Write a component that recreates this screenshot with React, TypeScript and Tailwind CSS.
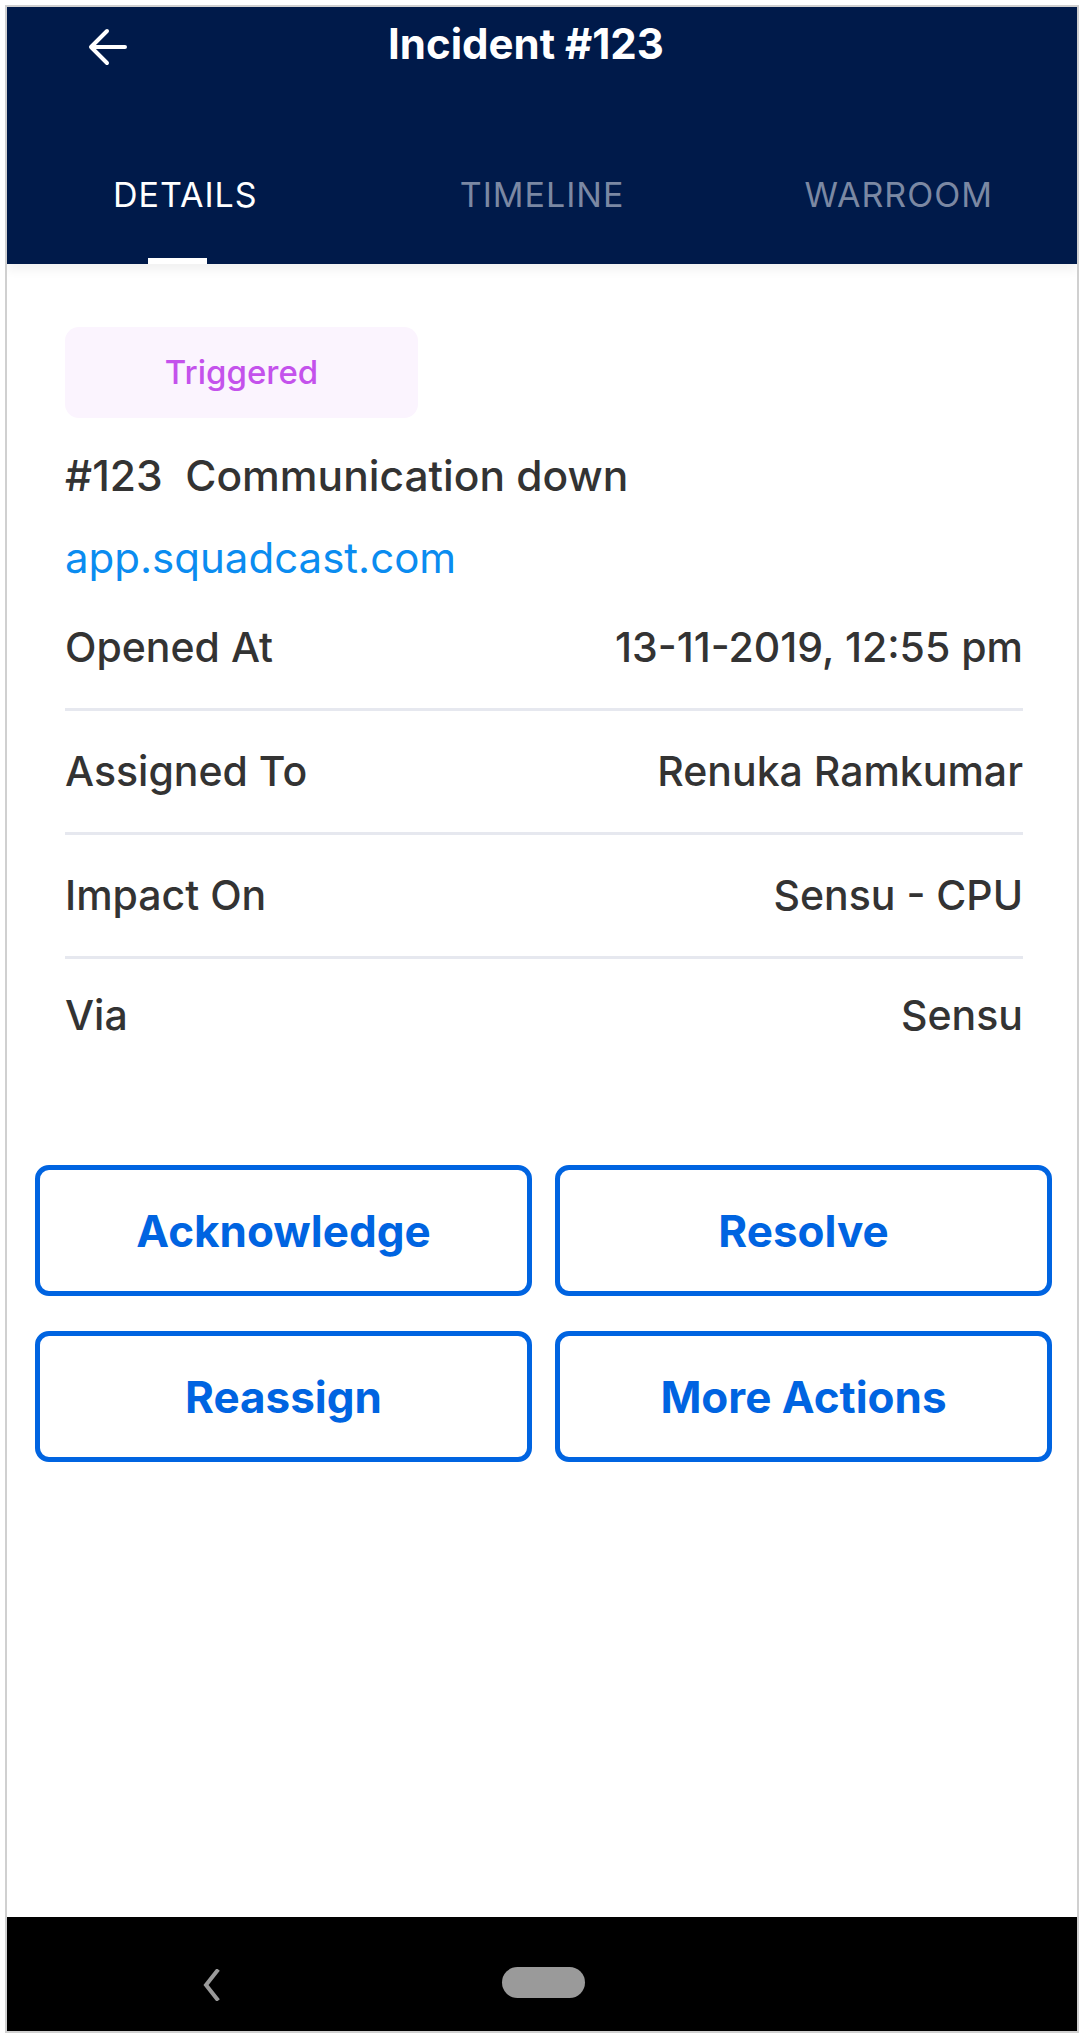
import React from 'react';

const rows = [
  { label: 'Opened At', value: '13-11-2019, 12:55 pm' },
  { label: 'Assigned To', value: 'Renuka Ramkumar' },
  { label: 'Impact On', value: 'Sensu - CPU' },
  { label: 'Via', value: 'Sensu' },
];

const actions = ['Acknowledge', 'Resolve', 'Reassign', 'More Actions'];

const tabs = ['DETAILS', 'TIMELINE', 'WARROOM'];

const App: React.FC = () => {
  return (
    <div className="w-[1084px] h-[2038px] bg-white p-[5px] font-['Inter',sans-serif]">
      <div className="h-full border-2 border-[#d0d0d0] flex flex-col overflow-hidden">
        {/* Header */}
        <div className="bg-[#001a4a] h-[257px] flex flex-col shrink-0 relative z-10 shadow-[0_6px_10px_rgba(0,0,0,0.06)]">
          <div className="h-[74px] flex items-center pl-[81px]">
            <svg width="40" height="40" viewBox="0 0 40 40" fill="none" className="mt-[6px]">
              <path d="M37 20H4M19 4L3 20l16 16" stroke="white" strokeWidth="4" strokeLinecap="round" strokeLinejoin="round" />
            </svg>
            <h1 className="ml-[260px] text-white text-[42px] font-bold leading-none">Incident #123</h1>
          </div>
          <div className="mt-auto h-[140px] flex">
            {tabs.map((t, i) => (
              <div key={t} className="flex-1 relative flex items-center justify-center">
                <span className={`text-[34px] tracking-[1px] ${i === 0 ? 'text-white' : 'text-[#7b88a3]'}`}>{t}</span>
                {i === 0 && <div className="absolute bottom-0 left-[141px] w-[59px] h-[6px] bg-white" />}
              </div>
            ))}
          </div>
        </div>

        {/* Body */}
        <div className="flex-1 flex flex-col">
          <div className="pl-[58px] pr-[54px] pt-[63px]">
            <div className="w-[353px] h-[91px] rounded-[14px] bg-[#fbf4fe] flex items-center justify-center">
              <span className="text-[33px] font-medium text-[#c452ec]">Triggered</span>
            </div>
            <p className="mt-[28px] text-[42.5px] leading-[60px] font-medium text-[#333333] whitespace-pre">#123  Communication down</p>
            <p className="mt-[23px] text-[42px] leading-[58px] text-[#0a8cf0]">app.squadcast.com</p>
            <div className="flex flex-col">
              {rows.map((r, i) => (
                <div
                  key={r.label}
                  className={`flex items-center justify-between text-[41px] font-medium text-[#333333] ${i < rows.length - 1 ? 'h-[124px] border-b-[3px] border-[#e6e8ef]' : 'h-[114px]'}`}
                >
                  <span>{r.label}</span>
                  <span>{r.value}</span>
                </div>
              ))}
            </div>
          </div>

          <div className="mt-[92px] pl-[28px] pr-[25px] grid grid-cols-2 gap-x-[23px] gap-y-[35px]">
            {actions.map((a) => (
              <button
                key={a}
                className="h-[131px] rounded-[14px] border-[5px] border-[#0064e1] text-[#0064e1] text-[44px] font-bold"
              >
                {a}
              </button>
            ))}
          </div>
        </div>

        {/* Android nav bar */}
        <div className="h-[114px] bg-black shrink-0 flex items-start pt-[50px]">
          <svg width="20" height="32" viewBox="0 0 20 32" className="ml-[194px] mt-[2px]">
            <path d="M16 2L5 16l11 14" stroke="#9a9a9a" strokeWidth="4" fill="none" strokeLinecap="square" />
          </svg>
          <div className="ml-[281px] w-[83px] h-[31px] rounded-full bg-[#9a9a9a]" />
        </div>
      </div>
    </div>
  );
};

export default App;
